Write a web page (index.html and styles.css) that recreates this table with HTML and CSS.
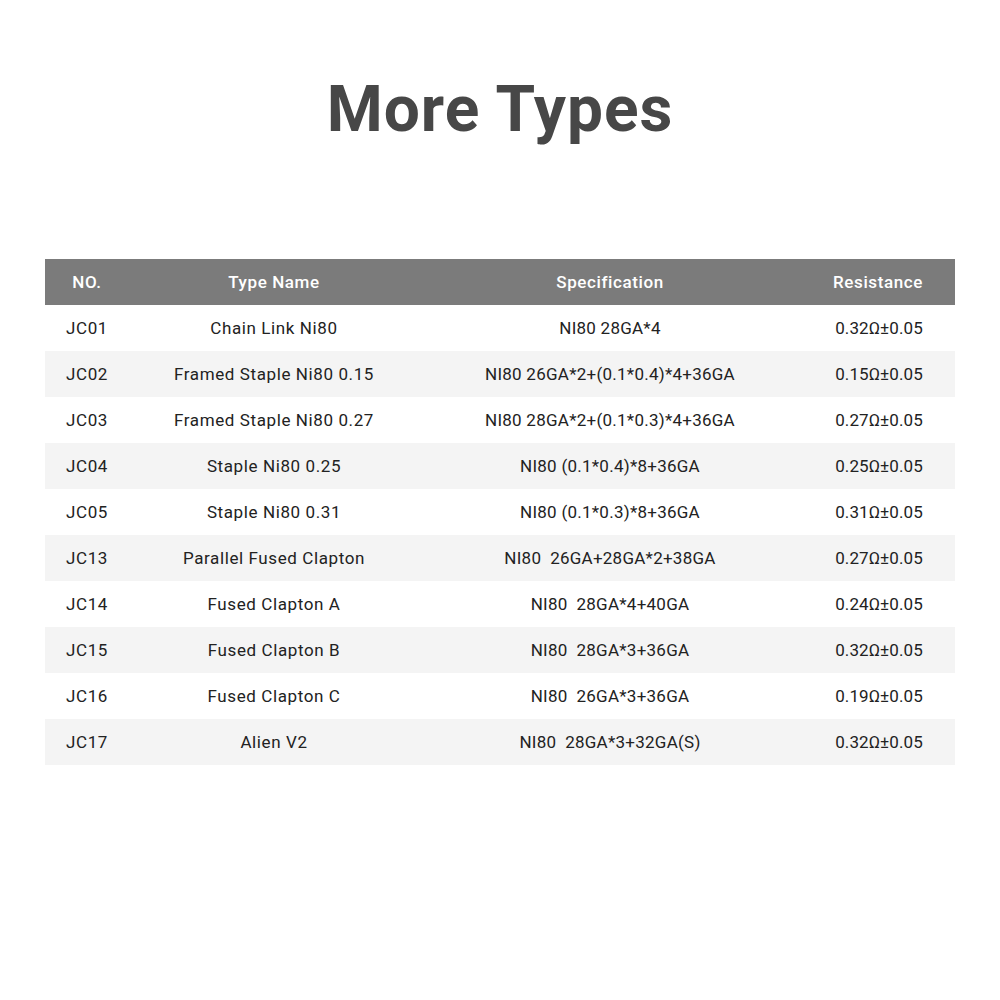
FILE: index.html
```html
<!DOCTYPE html>
<html>
<head>
<meta charset="utf-8">
<link rel="stylesheet" href="styles.css">
</head>
<body>
<div class="page">
  <h1 class="title">More Types</h1>
  <table class="types">
    <colgroup>
      <col class="c-no"><col class="c-name"><col class="c-spec"><col class="c-res">
    </colgroup>
    <thead>
      <tr><th>NO.</th><th>Type Name</th><th>Specification</th><th>Resistance</th></tr>
    </thead>
    <tbody>
      <tr><td>JC01</td><td>Chain Link Ni80</td><td>NI80 28GA*4</td><td>0.32Ω±0.05</td></tr>
      <tr><td>JC02</td><td>Framed Staple Ni80 0.15</td><td>NI80 26GA*2+(0.1*0.4)*4+36GA</td><td>0.15Ω±0.05</td></tr>
      <tr><td>JC03</td><td>Framed Staple Ni80 0.27</td><td>NI80 28GA*2+(0.1*0.3)*4+36GA</td><td>0.27Ω±0.05</td></tr>
      <tr><td>JC04</td><td>Staple Ni80 0.25</td><td>NI80 (0.1*0.4)*8+36GA</td><td>0.25Ω±0.05</td></tr>
      <tr><td>JC05</td><td>Staple Ni80 0.31</td><td>NI80 (0.1*0.3)*8+36GA</td><td>0.31Ω±0.05</td></tr>
      <tr><td>JC13</td><td>Parallel Fused Clapton</td><td>NI80&nbsp; 26GA+28GA*2+38GA</td><td>0.27Ω±0.05</td></tr>
      <tr><td>JC14</td><td>Fused Clapton A</td><td>NI80&nbsp; 28GA*4+40GA</td><td>0.24Ω±0.05</td></tr>
      <tr><td>JC15</td><td>Fused Clapton B</td><td>NI80&nbsp; 28GA*3+36GA</td><td>0.32Ω±0.05</td></tr>
      <tr><td>JC16</td><td>Fused Clapton C</td><td>NI80&nbsp; 26GA*3+36GA</td><td>0.19Ω±0.05</td></tr>
      <tr><td>JC17</td><td>Alien V2</td><td>NI80&nbsp; 28GA*3+32GA(S)</td><td>0.32Ω±0.05</td></tr>
    </tbody>
  </table>
</div>
</body>
</html>
```
FILE: styles.css
```css
html, body {
  margin: 0;
  padding: 0;
  background: #ffffff;
}
.page {
  width: 1000px;
  height: 1000px;
  padding-top: 70px;
  box-sizing: border-box;
  font-family: Roboto, "Liberation Sans", sans-serif;
}
.title {
  margin: 0;
  text-align: center;
  font-size: 64px;
  line-height: 80px;
  font-weight: 700;
  color: #474747;
  letter-spacing: 1px;
}
.types {
  margin: 109px 0 0 45px;
  width: 910px;
  border-collapse: collapse;
  table-layout: fixed;
  font-size: 17px;
  letter-spacing: 0.6px;
}
.c-no { width: 84px; }
.c-name { width: 290px; }
.c-spec { width: 382px; }
.c-res { width: 154px; }
.types th {
  height: 46px;
  padding: 0;
  background: #7b7b7b;
  color: #ffffff;
  font-weight: 500;
  text-align: center;
}
.types td {
  height: 46px;
  padding: 0;
  color: #222222;
  text-align: center;
  white-space: nowrap;
}
.types td:nth-child(3) {
  letter-spacing: 0.25px;
}
.types td:nth-child(4) {
  letter-spacing: 0.1px;
  padding-left: 2px;
}
.types tbody tr:nth-child(even) td {
  background: #f4f4f4;
}
```
